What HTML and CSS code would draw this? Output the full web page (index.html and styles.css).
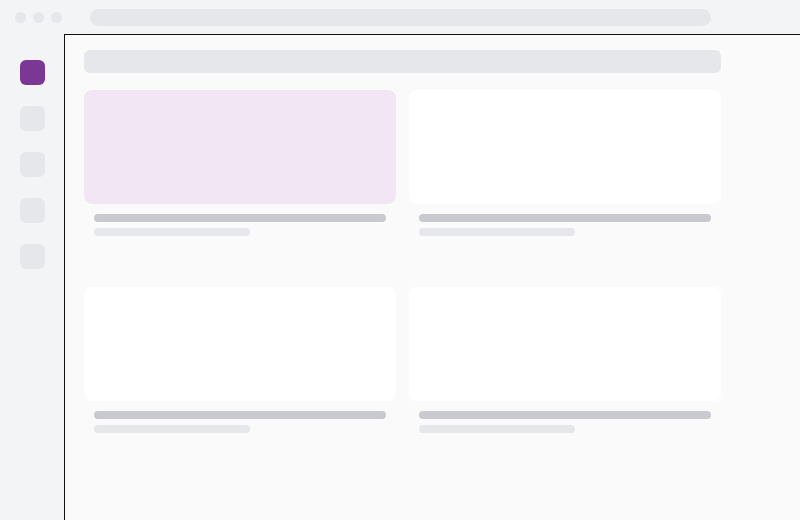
FILE: index.html
```html
<!DOCTYPE html>
<html>
<head>
<meta charset="utf-8">
<link rel="stylesheet" href="styles.css">
</head>
<body>
<div class="topbar">
  <div class="dots"><span class="dot"></span><span class="dot"></span><span class="dot"></span></div>
  <div class="address"></div>
</div>
<div class="main">
  <nav class="sidebar">
    <div class="nav-item active"></div>
    <div class="nav-item"></div>
    <div class="nav-item"></div>
    <div class="nav-item"></div>
    <div class="nav-item"></div>
  </nav>
  <section class="panel">
    <div class="header-bar"></div>
    <div class="grid">
      <div class="item">
        <div class="card card-accent"></div>
        <div class="line line-title"></div>
        <div class="line line-sub"></div>
      </div>
      <div class="item">
        <div class="card"></div>
        <div class="line line-title"></div>
        <div class="line line-sub"></div>
      </div>
      <div class="item">
        <div class="card"></div>
        <div class="line line-title"></div>
        <div class="line line-sub"></div>
      </div>
      <div class="item">
        <div class="card"></div>
        <div class="line line-title"></div>
        <div class="line line-sub"></div>
      </div>
    </div>
  </section>
</div>
</body>
</html>
```
FILE: styles.css
```css
html, body {
  margin: 0;
  padding: 0;
  width: 800px;
  height: 520px;
  overflow: hidden;
  background: #f3f4f6;
  font-family: "Liberation Sans", Arial, sans-serif;
}
.topbar {
  height: 34px;
  display: flex;
  align-items: center;
  padding-left: 15px;
  box-sizing: border-box;
}
.dots {
  display: flex;
  gap: 7px;
}
.dot {
  width: 11px;
  height: 11px;
  border-radius: 50%;
  background: #e5e7eb;
}
.address {
  margin-left: 28px;
  width: 621px;
  height: 17px;
  border-radius: 9px;
  background: #e5e7eb;
}
.main {
  display: flex;
  height: 486px;
}
.sidebar {
  width: 64px;
  flex: none;
  box-sizing: border-box;
  padding: 26px 0 0 20px;
  display: flex;
  flex-direction: column;
  gap: 21px;
}
.nav-item {
  width: 25px;
  height: 25px;
  border-radius: 6px;
  background: #e5e7eb;
}
.nav-item.active {
  background: #7b3794;
}
.panel {
  flex: 1;
  background: #fafafa;
  border-left: 1px solid #111;
  border-top: 1px solid #111;
  padding: 15px 0 0 19px;
}
.header-bar {
  width: 637px;
  height: 23px;
  border-radius: 6px;
  background: #e5e7eb;
}
.grid {
  margin-top: 17px;
  width: 637px;
  display: grid;
  grid-template-columns: 312px 312px;
  column-gap: 13px;
  row-gap: 51px;
}
.card {
  height: 114px;
  border-radius: 8px;
  background: #ffffff;
}
.card-accent {
  background: #f2e6f4;
}
.line {
  height: 8px;
  border-radius: 4px;
  margin-left: 10px;
}
.line-title {
  margin-top: 10px;
  width: 292px;
  background: #c8cad0;
}
.line-sub {
  margin-top: 6px;
  width: 156px;
  background: #e5e7eb;
}
```
